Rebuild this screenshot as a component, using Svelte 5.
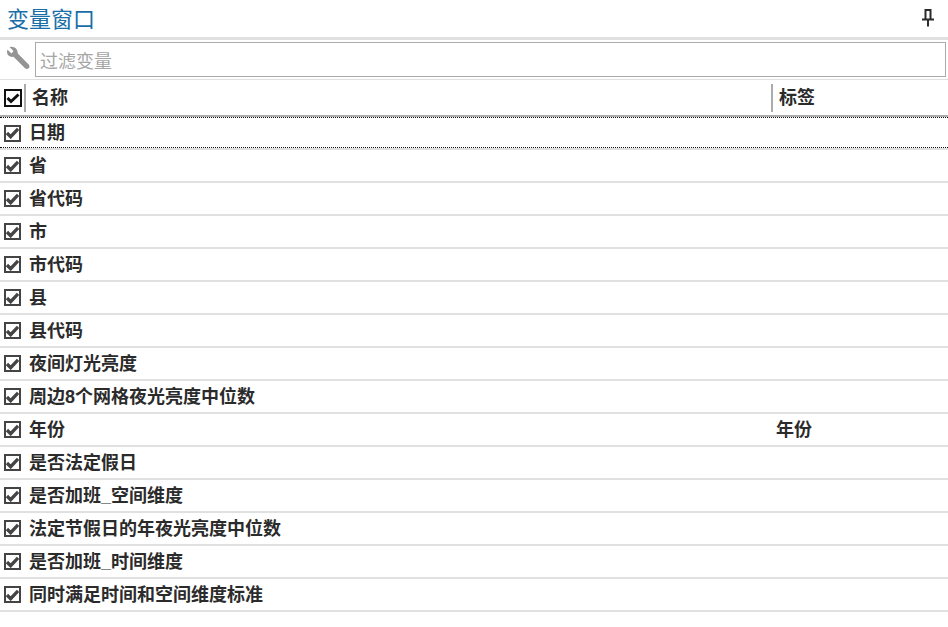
<script>
    const rows = [
        { name: "日期", label: "" },
        { name: "省", label: "" },
        { name: "省代码", label: "" },
        { name: "市", label: "" },
        { name: "市代码", label: "" },
        { name: "县", label: "" },
        { name: "县代码", label: "" },
        { name: "夜间灯光亮度", label: "" },
        { name: "周边8个网格夜光亮度中位数", label: "" },
        { name: "年份", label: "年份" },
        { name: "是否法定假日", label: "" },
        { name: "是否加班_空间维度", label: "" },
        { name: "法定节假日的年夜光亮度中位数", label: "" },
        { name: "是否加班_时间维度", label: "" },
        { name: "同时满足时间和空间维度标准", label: "" },
    ];
</script>

<div class="window">
    <div class="titlebar">
        <span class="title">变量窗口</span>
        <svg class="pin" width="12" height="18" viewBox="0 0 12 18">
            <path d="M2.5 1h7M3.5 1v9M8.5 1v9M0 10.5h12M6 10.5v7" fill="none" stroke="#2b2b2b" stroke-width="2" />
        </svg>
    </div>

    <div class="filter">
        <svg class="wrench" width="24" height="24" viewBox="0 0 24 24">
            <path d="M3.5 1 L7.5 5 L5.5 7.5 L1.5 3.8 C0 7.5 2.5 11.5 7.5 10.8 L19 22.3 C20.5 23.8 23.5 22.8 23.5 20.5 C23.5 19.5 23 18.8 22.2 18 L11.8 7.5 C12 3 8 -0.3 3.5 1 Z" fill="#949494" />
        </svg>
        <input type="text" placeholder="过滤变量" />
    </div>

    <div class="header">
        <span class="check head-check">
            <svg width="14" height="12" viewBox="0 0 14 12"><path d="M1.5 6 L5 9.5 L12.5 2.5" fill="none" stroke="#111" stroke-width="3" /></svg>
        </span>
        <span class="head-name">名称</span>
        <span class="head-label">标签</span>
    </div>

    {#each rows as row, i}
        <div class="row" class:current={i === 0}>
            <span class="check">
                <svg width="14" height="12" viewBox="0 0 14 12"><path d="M1 6 L5 10 L13 1.5" fill="none" stroke="#444" stroke-width="3.6" /></svg>
            </span>
            <span class="name">{row.name}</span>
            <span class="label">{row.label}</span>
        </div>
    {/each}
</div>

<style>
    :global(body) {
        margin: 0;
        background: #fff;
    }
    .window {
        width: 948px;
        height: 627px;
        overflow: hidden;
        font-family: "Liberation Sans", "Noto Sans CJK SC", sans-serif;
        color: #2b2b2b;
    }
    .titlebar {
        height: 37px;
        display: flex;
        align-items: center;
        justify-content: space-between;
        padding: 0 14px 0 7px;
        border-bottom: 3px solid #e0e0e0;
    }
    .title {
        font-size: 22px;
        color: #1a6ea8;
        margin-bottom: 3px;
    }
    .pin {
        margin-bottom: 1px;
    }
    .filter {
        height: 39px;
        display: flex;
        align-items: center;
        gap: 5px;
        padding: 0 2px 0 6px;
        border-bottom: 1px solid #e0e0e0;
    }
    .wrench {
        flex: none;
        margin-top: -3px;
    }
    input {
        flex: 1;
        height: 35px;
        box-sizing: border-box;
        border: 1px solid #ababab;
        outline: none;
        padding: 7px 4px 0;
        font-family: inherit;
        font-size: 18px;
        margin-top: -1px;
    }
    input::placeholder {
        color: #a6a6a6;
        opacity: 1;
    }
    .header {
        height: 35px;
        display: flex;
        align-items: center;
        border-bottom: 2px solid #ababab;
        font-weight: bold;
        font-size: 18px;
        padding-left: 4px;
    }
    .check {
        flex: none;
        width: 17px;
        height: 17px;
        box-sizing: border-box;
        border: 2px solid #444;
        display: flex;
        align-items: center;
        justify-content: center;
        background: #fff;
    }
    .head-check {
        width: 18px;
        height: 18px;
        border-color: #111;
        border-width: 2px;
    }
    .head-name {
        width: 747px;
        margin-left: 2px;
        padding-left: 6px;
        border-left: 2px solid #ababab;
        line-height: 28px;
        box-sizing: border-box;
    }
    .head-label {
        padding-left: 6px;
        border-left: 2px solid #ababab;
        line-height: 28px;
    }
    .row {
        height: 33px;
        box-sizing: border-box;
        display: flex;
        align-items: center;
        padding-left: 4px;
        border-bottom: 2px solid #e0e0e0;
        font-weight: bold;
        font-size: 18px;
    }
    .row.current {
        position: relative;
        border-top: 1px dotted #111;
    }
    .row.current::after {
        content: "";
        position: absolute;
        left: 0;
        right: 0;
        bottom: 0;
        border-top: 1px dotted #111;
    }
    .name {
        width: 747px;
        margin-left: 8px;
        margin-bottom: 4px;
    }
    .label {
        margin-bottom: 4px;
    }
</style>
